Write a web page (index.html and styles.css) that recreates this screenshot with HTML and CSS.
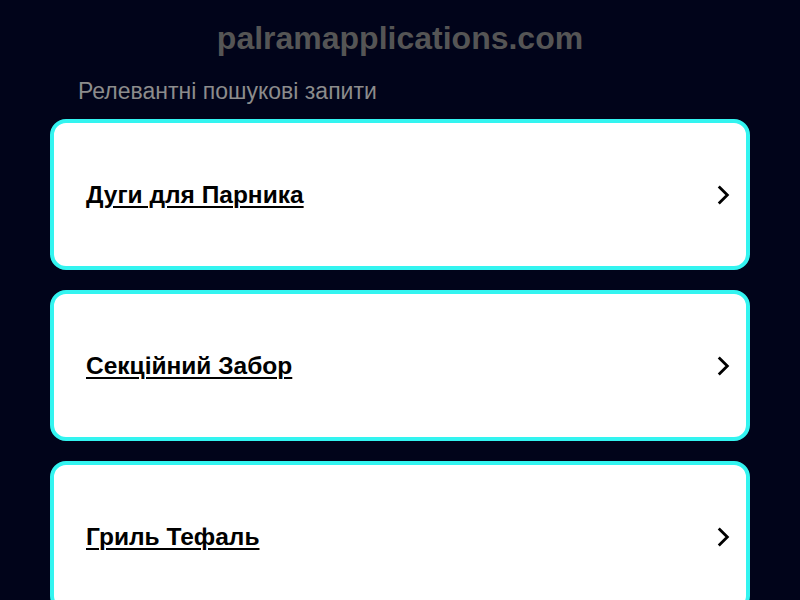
FILE: index.html
```html
<!DOCTYPE html>
<html lang="uk">
<head>
  <meta charset="UTF-8" />
  <meta name="viewport" content="width=device-width, initial-scale=1.0"/>
  <title>palramapplications.com</title>
  <link rel="stylesheet" href="styles.css">
</head>
<body>
  <div class="container">
    <h1 class="domain">palramapplications.com</h1>
    <p class="subtitle">Релевантні пошукові запити</p>

    <ul class="links">
      <li class="link-card">
        <a href="#">Дуги для Парника</a>
        <svg class="chevron" viewBox="0 0 24 24" width="26" height="26"><path d="M9 5l7 7-7 7" /></svg>
      </li>
      <li class="link-card">
        <a href="#">Секційний Забор</a>
        <svg class="chevron" viewBox="0 0 24 24" width="26" height="26"><path d="M9 5l7 7-7 7" /></svg>
      </li>
      <li class="link-card">
        <a href="#">Гриль Тефаль</a>
        <svg class="chevron" viewBox="0 0 24 24" width="26" height="26"><path d="M9 5l7 7-7 7" /></svg>
      </li>
    </ul>
  </div>
</body>
</html>
```

FILE: styles.css
```css
* {
  box-sizing: border-box;
  margin: 0;
  padding: 0;
  font-family: 'Liberation Sans', Arial, sans-serif;
}

body {
  background-color: #01041a;
  min-height: 100vh;
  overflow: hidden;
}

.container {
  width: 700px;
  margin: 0 auto;
  padding-top: 20px;
}

.domain {
  text-align: center;
  color: #555555;
  font-size: 32px;
  font-weight: bold;
  line-height: 36px;
}

.subtitle {
  color: #8c8c8c;
  font-size: 23px;
  line-height: 26px;
  margin-top: 22px;
  padding-left: 28px;
}

.links {
  list-style: none;
  margin-top: 15px;
  display: flex;
  flex-direction: column;
  gap: 20px;
}

.link-card {
  height: 151px;
  background-color: #ffffff;
  border: 4px solid #33f4f0;
  border-radius: 16px;
  padding: 0 10px 0 32px;
  display: flex;
  align-items: center;
  justify-content: space-between;
}

.link-card a {
  color: #000000;
  font-size: 24.5px;
  font-weight: bold;
  text-decoration: underline;
  text-decoration-thickness: 2px;
  text-underline-offset: 3px;
}

.chevron {
  fill: none;
  stroke: #000000;
  stroke-width: 2.6;
  stroke-linecap: square;
}
```
